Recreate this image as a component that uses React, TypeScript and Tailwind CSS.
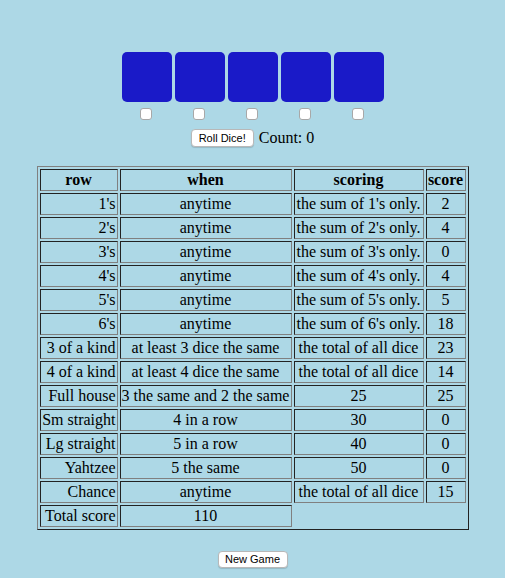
import React from "react";

type Row = {
  name: string;
  when: string;
  scoring: string;
  score: number;
};

const rows: Row[] = [
  { name: "1's", when: "anytime", scoring: "the sum of 1's only.", score: 2 },
  { name: "2's", when: "anytime", scoring: "the sum of 2's only.", score: 4 },
  { name: "3's", when: "anytime", scoring: "the sum of 3's only.", score: 0 },
  { name: "4's", when: "anytime", scoring: "the sum of 4's only.", score: 4 },
  { name: "5's", when: "anytime", scoring: "the sum of 5's only.", score: 5 },
  { name: "6's", when: "anytime", scoring: "the sum of 6's only.", score: 18 },
  { name: "3 of a kind", when: "at least 3 dice the same", scoring: "the total of all dice", score: 23 },
  { name: "4 of a kind", when: "at least 4 dice the same", scoring: "the total of all dice", score: 14 },
  { name: "Full house", when: "3 the same and 2 the same", scoring: "25", score: 25 },
  { name: "Sm straight", when: "4 in a row", scoring: "30", score: 0 },
  { name: "Lg straight", when: "5 in a row", scoring: "40", score: 0 },
  { name: "Yahtzee", when: "5 the same", scoring: "50", score: 0 },
  { name: "Chance", when: "anytime", scoring: "the total of all dice", score: 15 },
];

const cell =
  "border border-t-[#222] border-l-[#222] border-b-[#808080] border-r-[#808080] p-[1px] leading-[18px] whitespace-nowrap";

const button =
  "bg-white border border-[#b8b8b8] rounded-[4px] font-['Liberation_Sans',Arial,sans-serif] text-[11px] text-black leading-none shadow-[0_1px_1px_rgba(0,0,0,0.15)]";

export default function App() {
  return (
    <div className="min-h-[578px] w-full bg-[#add8e6] pt-[52px] font-['Liberation_Serif','Times_New_Roman',serif] text-[16px] text-black">
      <div className="flex justify-center gap-[3px]">
        {[0, 1, 2, 3, 4].map((i) => (
          <div key={i} className="flex w-[50px] flex-col items-center">
            <div className="h-[50px] w-[50px] rounded-[5px] bg-[#1a1ac8]" />
            <div className="mt-[6px] mr-[2px] h-[12px] w-[12px] rounded-[3px] border border-[#a8a8a8] bg-white" />
          </div>
        ))}
      </div>

      <div className="mt-[9px] flex items-center justify-center gap-[5px]">
        <button className={`${button} h-[18px] w-[63px]`}>Roll Dice!</button>
        <span className="leading-[18px]">Count: 0</span>
      </div>

      <table className="mx-auto mt-[19px] w-[432px] table-fixed border-separate border-spacing-[2px] border border-t-[#808080] border-l-[#808080] border-b-[#222] border-r-[#222]">
        <thead>
          <tr>
            <th className={`${cell} w-[78px] font-bold`}>row</th>
            <th className={`${cell} w-[172px] font-bold`}>when</th>
            <th className={`${cell} w-[130px] font-bold`}>scoring</th>
            <th className={`${cell} w-[40px] font-bold`}>score</th>
          </tr>
        </thead>
        <tbody>
          {rows.map((r) => (
            <tr key={r.name}>
              <td className={`${cell} text-right`}>{r.name}</td>
              <td className={`${cell} text-center`}>{r.when}</td>
              <td className={`${cell} text-center`}>{r.scoring}</td>
              <td className={`${cell} text-center`}>{r.score}</td>
            </tr>
          ))}
          <tr>
            <td className={`${cell} text-right`}>Total score</td>
            <td className={`${cell} text-center`}>110</td>
          </tr>
        </tbody>
      </table>

      <div className="mt-[21px] flex justify-center pb-[10px]">
        <button className={`${button} h-[17px] w-[70px]`}>New Game</button>
      </div>
    </div>
  );
}
